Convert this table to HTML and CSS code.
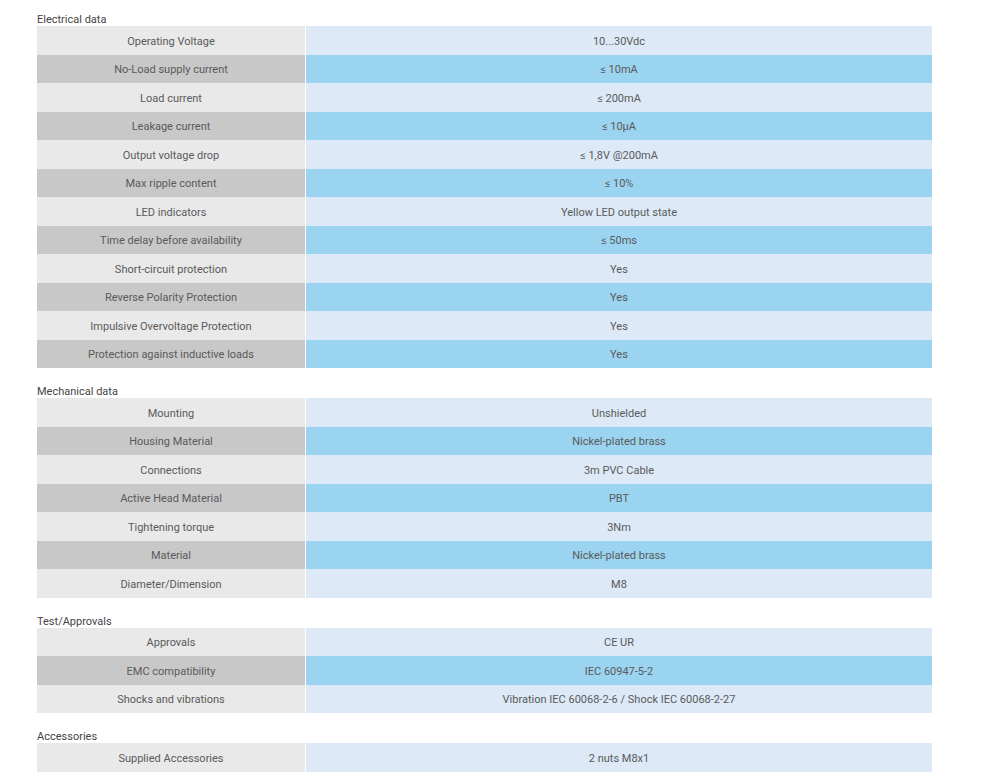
FILE: index.html
```html
<!DOCTYPE html>
<html>
<head>
<meta charset="utf-8">
<link rel="stylesheet" href="styles.css">
</head>
<body>
<div class="page">
  <section class="section">
    <h3 class="title">Electrical data</h3>
    <div class="table">
      <div class="row"><div class="label">Operating Voltage</div><div class="value">10...30Vdc</div></div>
      <div class="row"><div class="label">No-Load supply current</div><div class="value">≤ 10mA</div></div>
      <div class="row"><div class="label">Load current</div><div class="value">≤ 200mA</div></div>
      <div class="row"><div class="label">Leakage current</div><div class="value">≤ 10µA</div></div>
      <div class="row"><div class="label">Output voltage drop</div><div class="value">≤ 1,8V @200mA</div></div>
      <div class="row"><div class="label">Max ripple content</div><div class="value">≤ 10%</div></div>
      <div class="row"><div class="label">LED indicators</div><div class="value">Yellow LED output state</div></div>
      <div class="row"><div class="label">Time delay before availability</div><div class="value">≤ 50ms</div></div>
      <div class="row"><div class="label">Short-circuit protection</div><div class="value">Yes</div></div>
      <div class="row"><div class="label">Reverse Polarity Protection</div><div class="value">Yes</div></div>
      <div class="row"><div class="label">Impulsive Overvoltage Protection</div><div class="value">Yes</div></div>
      <div class="row"><div class="label">Protection against inductive loads</div><div class="value">Yes</div></div>
    </div>
  </section>
  <section class="section">
    <h3 class="title">Mechanical data</h3>
    <div class="table">
      <div class="row"><div class="label">Mounting</div><div class="value">Unshielded</div></div>
      <div class="row"><div class="label">Housing Material</div><div class="value">Nickel-plated brass</div></div>
      <div class="row"><div class="label">Connections</div><div class="value">3m PVC Cable</div></div>
      <div class="row"><div class="label">Active Head Material</div><div class="value">PBT</div></div>
      <div class="row"><div class="label">Tightening torque</div><div class="value">3Nm</div></div>
      <div class="row"><div class="label">Material</div><div class="value">Nickel-plated brass</div></div>
      <div class="row"><div class="label">Diameter/Dimension</div><div class="value">M8</div></div>
    </div>
  </section>
  <section class="section">
    <h3 class="title">Test/Approvals</h3>
    <div class="table">
      <div class="row"><div class="label">Approvals</div><div class="value">CE UR</div></div>
      <div class="row"><div class="label">EMC compatibility</div><div class="value">IEC 60947-5-2</div></div>
      <div class="row"><div class="label">Shocks and vibrations</div><div class="value">Vibration IEC 60068-2-6 / Shock IEC 60068-2-27</div></div>
    </div>
  </section>
  <section class="section">
    <h3 class="title">Accessories</h3>
    <div class="table">
      <div class="row"><div class="label">Supplied Accessories</div><div class="value">2 nuts M8x1</div></div>
    </div>
  </section>
</div>
</body>
</html>
```
FILE: styles.css
```css
html, body {
  margin: 0;
  padding: 0;
  background: #ffffff;
}
body {
  font-family: Roboto, "Liberation Sans", Arial, sans-serif;
  font-size: 11px;
  color: #5a5a5a;
}
.page {
  padding: 12px 0 0 37px;
  width: 895px;
}
.section + .section {
  margin-top: 16px;
}
.title {
  margin: 0;
  padding-top: 1px;
  font-size: 11px;
  line-height: 13px;
  font-weight: 400;
  color: #444444;
}
.table {
  display: flex;
  flex-direction: column;
}
.row {
  display: grid;
  grid-template-columns: 268px 626px;
  column-gap: 1px;
  height: 28.5px;
}
.label, .value {
  display: flex;
  align-items: center;
  justify-content: center;
  text-align: center;
  padding-top: 2px;
  box-sizing: border-box;
}
.label { background: #e9e9e9; }
.value { background: #dde9f6; }
.row:nth-child(even) .label { background: #c8c8c8; }
.row:nth-child(even) .value { background: #9ad4f0; }
```
